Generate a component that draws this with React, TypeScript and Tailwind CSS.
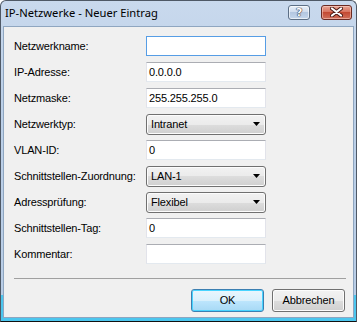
import React from "react";

const rows: { label: string; kind: "input" | "select"; value: string; focus?: boolean }[] = [
  { label: "Netzwerkname:", kind: "input", value: "", focus: true },
  { label: "IP-Adresse:", kind: "input", value: "0.0.0.0" },
  { label: "Netzmaske:", kind: "input", value: "255.255.255.0" },
  { label: "Netzwerktyp:", kind: "select", value: "Intranet" },
  { label: "VLAN-ID:", kind: "input", value: "0" },
  { label: "Schnittstellen-Zuordnung:", kind: "select", value: "LAN-1" },
  { label: "Adressprüfung:", kind: "select", value: "Flexibel" },
  { label: "Schnittstellen-Tag:", kind: "input", value: "0" },
  { label: "Kommentar:", kind: "input", value: "" },
];

function TextBox({ value, focus }: { value: string; focus?: boolean }) {
  return (
    <div
      className={`w-[120px] h-[20px] bg-white border flex items-center pl-[2px] ${
        focus ? "border-[#569de5]" : "border-[#abadb3] border-l-[#e2e3ea] border-r-[#e2e3ea] border-b-[#e3e9ef]"
      }`}
    >
      {value}
    </div>
  );
}

function Select({ value }: { value: string }) {
  return (
    <div className="w-[120px] h-[21px] rounded-[3px] border border-[#707070] bg-[linear-gradient(#f2f2f2_0%,#ebebeb_50%,#dddddd_50%,#cfcfcf_100%)] flex items-center justify-between pl-[4px] pr-[5px] shadow-[inset_0_0_0_1px_#fcfcfc]">
      <span>{value}</span>
      <svg width="7" height="4" viewBox="0 0 7 4">
        <path d="M0 0h7L3.5 4z" fill="#000" />
      </svg>
    </div>
  );
}

export default function App() {
  return (
    <div className="w-[357px] h-[322px] bg-white font-['Liberation_Sans',Arial,sans-serif] text-[11px] tracking-[-0.15px] text-black">
      <div className="w-[357px] h-[322px] flex flex-col rounded-t-[6px] border border-[#4f5966] border-b-[#111] bg-[linear-gradient(#c9d9ed,#bcd0e8_30%,#b9cde6_92%,#4cc6ee_92%,#4cc6ee)] px-[2px] pb-[3px]">
        {/* title bar */}
        <div className="h-[25px] flex items-center justify-between pl-[2px] pr-[2px] shrink-0">
          <span className="text-[11.2px] font-['Noto_Sans',sans-serif] text-black tracking-normal -mt-[1px]">
            IP-Netzwerke - Neuer Eintrag
          </span>
          <div className="flex items-center gap-[11px] -mt-[3px]">
            <div className="w-[22px] h-[15px] rounded-[3px] border border-[#5c6f86] bg-[linear-gradient(#e8f0f9_0%,#cfdcee_45%,#b3c7e1_50%,#c4d6ec_100%)] flex items-center justify-center shadow-[inset_0_0_0_1px_rgba(255,255,255,0.6)]">
              <span className="text-[11px] font-bold text-white leading-none font-['DejaVu_Sans',sans-serif] [text-shadow:0_0_1px_#334,0_0_1px_#334,0_0_1px_#334]">
                ?
              </span>
            </div>
            <div className="w-[31px] h-[15px] rounded-[3px] border border-[#6b2a22] bg-[linear-gradient(#e8a593_0%,#d8735f_45%,#c34a33_50%,#d0705b_100%)] flex items-center justify-center shadow-[inset_0_0_0_1px_rgba(255,220,210,0.5)]">
              <svg width="13" height="10" viewBox="0 0 13 10">
                <path d="M2 1.5L11 8.5M11 1.5L2 8.5" stroke="#4a1a14" strokeWidth="4" strokeLinecap="round" />
                <path d="M2 1.5L11 8.5M11 1.5L2 8.5" stroke="#fff" strokeWidth="2.2" strokeLinecap="round" />
              </svg>
            </div>
          </div>
        </div>

        {/* client */}
        <div className="flex-1 bg-[#f0f0f0] border border-[#8fa6c0] flex flex-col pl-[10px] pr-[7px] pt-[9px]">
          <div className="flex flex-col gap-[6px]">
            {rows.map((r) => (
              <div key={r.label} className="h-[20px] flex items-center">
                <div className="w-[132px] shrink-0">{r.label}</div>
                {r.kind === "input" ? <TextBox value={r.value} focus={r.focus} /> : <Select value={r.value} />}
              </div>
            ))}
          </div>

          <div className="mt-[14px] h-px bg-[#a0a0a0]" />

          <div className="flex justify-end gap-[8px] mt-[10px] pr-[1px]">
            <button className="w-[73px] h-[23px] rounded-[3px] border border-[#3c7fb1] bg-[linear-gradient(#eaf6fd_0%,#d9f0fc_50%,#bee6fd_50%,#a7d9f5_100%)] shadow-[inset_0_0_0_1px_#48d4ff] text-[11px]">
              OK
            </button>
            <button className="w-[73px] h-[23px] rounded-[3px] border border-[#707070] bg-[linear-gradient(#f2f2f2_0%,#ebebeb_50%,#dddddd_50%,#cfcfcf_100%)] shadow-[inset_0_0_0_1px_#fcfcfc] text-[11px]">
              Abbrechen
            </button>
          </div>
        </div>
      </div>
    </div>
  );
}
